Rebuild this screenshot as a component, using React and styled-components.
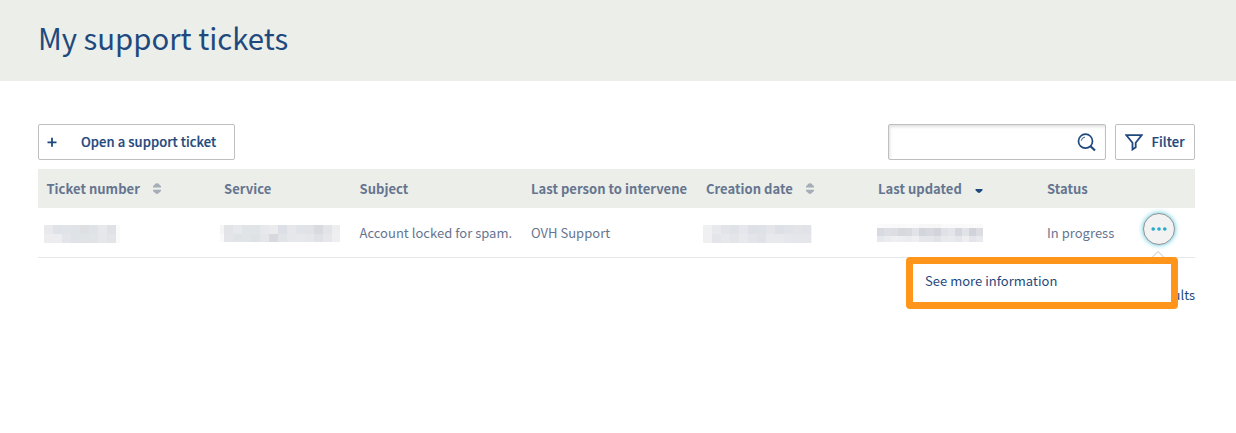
import React from "react";
import styled, { createGlobalStyle } from "styled-components";

const navy = "#1f497d";
const slate = "#66758f";
const sand = "#ebeee9";

const GlobalStyle = createGlobalStyle`
  * { box-sizing: border-box; }
  body {
    margin: 0;
    min-height: 100vh;
    background: #fff;
    color: ${navy};
    font-family: "Noto Sans CJK SC", "Noto Sans", sans-serif;
    font-size: 13px;
  }
`;

const PageHeader = styled.header`
  height: 81px;
  padding: 0 38px 7px;
  display: flex;
  align-items: center;
  background: ${sand};
`;

const Title = styled.h1`
  margin: 0;
  font-size: 29.3px;
  line-height: 40px;
  font-weight: 400;
`;

const Content = styled.main`
  padding: 43px 41px 0 38px;
`;

const Toolbar = styled.div`
  display: flex;
  justify-content: space-between;
  height: 36px;
  margin-bottom: 9px;
`;

const ToolGroup = styled.div`
  display: flex;
  gap: 9px;
`;

const Button = styled.button`
  display: flex;
  align-items: center;
  width: ${(p) => p.$width}px;
  height: 36px;
  padding: 0 0 0 ${(p) => p.$pad}px;
  gap: ${(p) => p.$gap}px;
  border: 1px solid #bfbfbf;
  border-radius: 2px;
  background: #fff;
  color: ${navy};
  font-family: inherit;
  font-size: 13px;
  font-weight: 500;
  white-space: nowrap;
`;

const ButtonLabel = styled.span`
  padding-bottom: 1px;
  letter-spacing: 0.06px;
  -webkit-text-stroke: 0.2px ${navy};
`;

const SearchBox = styled.div`
  display: flex;
  align-items: center;
  justify-content: flex-end;
  width: 218px;
  height: 36px;
  padding-right: 9px;
  border: 1px solid #bfbfbf;
  border-radius: 2px;
  box-shadow: inset 1px 2px 3px rgba(0, 0, 0, 0.12);
`;

const TableRow = styled.div`
  display: grid;
  grid-template-columns: 178px 135px 172px 175px 172px 169px 1fr;
  align-items: center;
`;

const HeadRow = styled(TableRow)`
  height: 39px;
  background: ${sand};
`;

const BodyRow = styled(TableRow)`
  height: 50px;
  border-bottom: 1px solid #e8e8e8;
`;

const HeadCell = styled.div`
  display: flex;
  align-items: center;
  padding-left: ${(p) => p.$pad ?? 8}px;
  gap: 13.6px;
  color: ${slate};
  font-size: 13px;
  font-weight: 700;
  line-height: 20px;
  letter-spacing: 0.04px;
  white-space: nowrap;
`;

const Cell = styled.div`
  display: flex;
  align-items: center;
  height: 49px;
  padding: 0 0 0 ${(p) => p.$pad ?? 8}px;
  color: ${slate};
  font-size: 13px;
  line-height: 20px;
  white-space: nowrap;
  letter-spacing: 0.02px;
`;

const StatusCell = styled(Cell)`
  justify-content: space-between;
  padding-right: 20px;
`;

const CellText = styled.span`
  padding-top: 1px;
`;

const Mosaic = styled.div`
  display: grid;
  grid-template-columns: ${(p) => p.$cols};
  grid-template-rows: ${(p) => p.$rows};
  margin-top: ${(p) => p.$top || 0}px;
`;

const Pixel = styled.span`
  background: ${(p) => p.$tone};
`;

const MenuAnchor = styled.div`
  position: relative;
  display: flex;
  margin-top: -7px;
`;

const MoreButton = styled.button`
  display: flex;
  align-items: center;
  justify-content: center;
  width: 32px;
  height: 32px;
  padding: 0;
  border: 1px solid #949494;
  border-radius: 50%;
  background: #f2f2f2;
  box-shadow: 0 0 5px #4fc3da;
`;

const Caret = styled.svg`
  position: absolute;
  top: 37px;
  left: 8px;
`;

const Menu = styled.div`
  position: absolute;
  top: 44px;
  right: -2.5px;
  display: flex;
  align-items: center;
  width: 271.5px;
  height: 52px;
  padding: 0 0 5px 12px;
  border: 7px solid #ff961b;
  border-radius: 4px;
  background: #fff;
  color: ${navy};
  font-size: 13px;
`;

const Pagination = styled.div`
  display: flex;
  justify-content: flex-end;
  padding-top: 27px;
  font-size: 13px;
  line-height: 20px;
`;

const ticketPixels = {
  cols: "repeat(8, 9px) 4px",
  rows: "9px 9px",
  tones: "#e7e9ec #dfe2e6 #e0e3e8 #dfe2e6 #dddfe3 #dfe3e7 #e7e8ec #dee1e6 #fafafa #ededf0 #ecedef #e4e5ea #dfe2e6 #dfe3e6 #e1e3e7 #e6e7eb #e2e4e8 #fafafa",
};
const servicePixels = {
  cols: "4px repeat(12, 9px) 8px",
  rows: "9px 8px",
  tones: "#f5f5f6 #e2e4e8 #e7e8ed #e1e4e7 #e1e4e7 #e7e8ec #ebebee #dce0e6 #e6e7eb #e0e3e7 #e0e2e6 #d9dae0 #e2e4e8 #eeeef1 #fafafa #e3e5e9 #dfe3e6 #e1e4e7 #dfe2e5 #e5e6ea #d8d9de #e1e4e7 #e6e7eb #e7e8ec #e5e6ea #e0e1e7 #e6e7eb #efeff2",
};
const createdPixels = {
  cols: "repeat(12, 9px) 1px",
  rows: "9px 9px",
  tones: "#eff0f2 #e8e9ed #e2e4e9 #dfe2e7 #e6e7ec #dde1e7 #dee1e7 #e3e5e9 #dde0e6 #dfe2e7 #e3e4e8 #e2e3e8 #f5f5f6 #f0f0f2 #e4e5ea #e7e8ec #e3e5e9 #e8e9ed #e4e5ea #e0e2e8 #e8e9ed #e8e9ed #e6e7ec #e5e6eb #e4e6ea #f5f5f6",
};
const updatedPixels = {
  cols: "repeat(15, 7.07px)",
  rows: "4px 8px 6px",
  tones: "#fbfbfb #fafafa #fafafa #fafafa #fbfbfb #fafafa #f7f7f8 #f7f7f8 #f7f7f8 #fafafa #fafafa #fafafa #fafafa #fafafa #fafafa #d8dae1 #dedfe5 #dcdee3 #d6d8de #d8dae0 #e1e3e8 #d2d5dc #d7d9df #d1d4da #dfe1e6 #e4e5ea #d4d7dd #e1e3e8 #d0d3da #dbdde3 #e7e8ec #ebecef #efeff2 #eeeef1 #ebecef #efeff2 #e5e7eb #e5e6ea #e0e2e7 #e8e9ed #e9eaee #e5e6eb #eeeef1 #e4e5ea #e8e9ed",
};

function Redacted({ data, top }) {
  return (
    <Mosaic $cols={data.cols} $rows={data.rows} $top={top}>
      {data.tones.split(" ").map((tone, i) => (
        <Pixel key={i} $tone={tone} />
      ))}
    </Mosaic>
  );
}

const SortIcon = () => (
  <svg width="8" height="12" viewBox="0 0 8 12" fill="#a5adb8">
    <path d="M0 4.4V3.2L2.7 .6Q4-.2 5.3 .6L8 3.2V4.4ZM0 6.8V8L2.7 10.6Q4 11.4 5.3 10.6L8 8V6.8Z" />
  </svg>
);

const SortDownIcon = () => (
  <svg width="8" height="12" viewBox="-.5 0 8 12" fill={navy}>
    <path d="M0 6H7V7.2L4.7 9.5Q3.5 10.3 2.3 9.5L0 7.2Z" />
  </svg>
);

const SearchIcon = () => (
  <svg width="19" height="19" viewBox="0 0 19 19" fill="none" stroke={navy}>
    <circle cx="8.5" cy="8.2" r="7" strokeWidth="1.7" />
    <path d="M13.3 13L18 17.5" strokeWidth="2.2" />
    <path d="M4.3 7.7Q4.6 4.5 8 4.1" strokeWidth="0.9" />
  </svg>
);

const FilterIcon = () => (
  <svg width="18" height="17" viewBox="0 0 18 17" fill="none" stroke={navy}>
    <path d="M1.4 1.2H16.6L10.7 8.7V13.3L7.5 15.5V8.7Z" strokeWidth="1.8" />
  </svg>
);

const PlusIcon = () => (
  <svg width="10" height="10" viewBox="0 0 10 10" stroke={navy} strokeWidth="1.8">
    <path d="M5 .8V9.8M.5 5.3H9.5" />
  </svg>
);

const DotsIcon = () => (
  <svg width="16" height="4" viewBox="0 0 16 4" fill="#27a9c9">
    <circle cx="2.2" cy="2" r="1.8" />
    <circle cx="8" cy="2" r="1.8" />
    <circle cx="13.8" cy="2" r="1.8" />
  </svg>
);

export default function App() {
  return (
    <>
      <GlobalStyle />
      <PageHeader>
        <Title>My support tickets</Title>
      </PageHeader>
      <Content>
        <Toolbar>
          <Button $width={197} $pad={8} $gap={24}>
            <PlusIcon />
            <ButtonLabel>Open a support ticket</ButtonLabel>
          </Button>
          <ToolGroup>
            <SearchBox>
              <SearchIcon />
            </SearchBox>
            <Button $width={80} $pad={9} $gap={8.6}>
              <FilterIcon />
              <ButtonLabel>Filter</ButtonLabel>
            </Button>
          </ToolGroup>
        </Toolbar>
        <HeadRow>
          <HeadCell $pad={8.4}>Ticket number <SortIcon /></HeadCell>
          <HeadCell>Service</HeadCell>
          <HeadCell $pad={8.5}>Subject</HeadCell>
          <HeadCell>Last person to intervene</HeadCell>
          <HeadCell>Creation date <SortIcon /></HeadCell>
          <HeadCell>Last updated <SortDownIcon /></HeadCell>
          <HeadCell>Status</HeadCell>
        </HeadRow>
        <BodyRow>
          <Cell $pad={6}><Redacted data={ticketPixels} top={2} /></Cell>
          <Cell $pad={4}><Redacted data={servicePixels} top={1} /></Cell>
          <Cell $pad={8.5}><CellText>Account locked for spam.</CellText></Cell>
          <Cell><CellText>OVH Support</CellText></Cell>
          <Cell $pad={5}><Redacted data={createdPixels} top={2} /></Cell>
          <Cell $pad={7}><Redacted data={updatedPixels} /></Cell>
          <StatusCell>
            <CellText>In progress</CellText>
            <MenuAnchor>
              <MoreButton aria-label="Actions">
                <DotsIcon />
              </MoreButton>
              <Caret width="14" height="8" viewBox="0 0 14 8" fill="#fff" stroke="#ddd" strokeWidth="1.3">
                <path d="M1 7.5L7 1.5L13 7.5" />
              </Caret>
              <Menu>See more information</Menu>
            </MenuAnchor>
          </StatusCell>
        </BodyRow>
        <Pagination>results</Pagination>
      </Content>
    </>
  );
}
